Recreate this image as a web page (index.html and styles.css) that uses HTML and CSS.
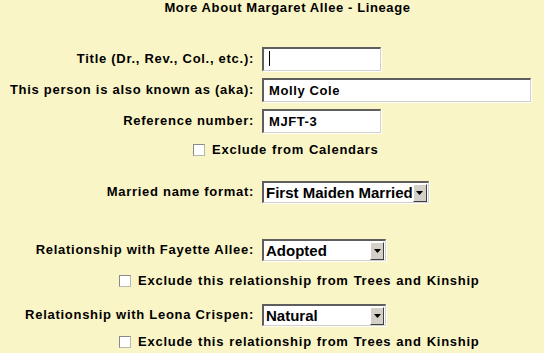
FILE: index.html
```html
<!DOCTYPE html>
<html>
<head>
<meta charset="utf-8">
<link rel="stylesheet" href="styles.css">
</head>
<body>
<div class="page">
  <h1 class="title">More About Margaret Allee - Lineage</h1>

  <div class="row row-first">
    <label class="lbl">Title (Dr., Rev., Col., etc.):</label>
    <span class="caret-wrap"><input class="txt w-short" type="text" value=""></span>
  </div>
  <div class="row row-tight">
    <label class="lbl">This person is also known as (aka):</label>
    <input class="txt w-long" type="text" value="Molly Cole">
  </div>
  <div class="row row-tight">
    <label class="lbl">Reference number:</label>
    <input class="txt w-short" type="text" value="MJFT-3">
  </div>
  <div class="check check-cal">
    <span class="box"></span><span class="ctext">Exclude from Calendars</span>
  </div>

  <div class="row row-married">
    <label class="lbl">Married name format:</label>
    <div class="sel"><span class="sel-text">First Maiden Married</span><span class="sel-btn"><svg width="7" height="4" viewBox="0 0 7 4"><path d="M0 0H7L3.5 4Z" fill="#000"/></svg></span></div>
  </div>

  <div class="row row-fayette">
    <label class="lbl">Relationship with Fayette Allee:</label>
    <div class="sel w-sel"><span class="sel-text">Adopted</span><span class="sel-btn"><svg width="7" height="4" viewBox="0 0 7 4"><path d="M0 0H7L3.5 4Z" fill="#000"/></svg></span></div>
  </div>
  <div class="check check-rel check-a">
    <span class="box"></span><span class="ctext">Exclude this relationship from Trees and Kinship</span>
  </div>

  <div class="row row-leona">
    <label class="lbl">Relationship with Leona Crispen:</label>
    <div class="sel w-sel"><span class="sel-text">Natural</span><span class="sel-btn"><svg width="7" height="4" viewBox="0 0 7 4"><path d="M0 0H7L3.5 4Z" fill="#000"/></svg></span></div>
  </div>
  <div class="check check-rel check-b">
    <span class="box"></span><span class="ctext">Exclude this relationship from Trees and Kinship</span>
  </div>
</div>
</body>
</html>
```
FILE: styles.css
```css
html, body {
  margin: 0;
  padding: 0;
  background: #faf5c6;
}
body {
  width: 544px;
  height: 353px;
  overflow: hidden;
  font-family: "Liberation Sans", Arial, sans-serif;
  font-weight: bold;
  font-size: 13px;
  color: #000;
}
.page {
  display: flex;
  flex-direction: column;
}
.title {
  margin: 0;
  padding-left: 31px;
  height: 16px;
  line-height: 16px;
  font-size: 13px;
  letter-spacing: 0.6px;
  text-align: center;
  font-weight: bold;
}
.row {
  display: grid;
  grid-template-columns: 254px auto;
  column-gap: 8px;
  align-items: center;
  justify-items: start;
}
.lbl {
  justify-self: end;
  letter-spacing: 0.72px;
  white-space: nowrap;
  line-height: 16px;
}
.row-first { margin-top: 31px; }
.row-tight { margin-top: 7px; }
.row-married { margin-top: 22px; }
.row-fayette { margin-top: 36px; }
.row-leona { margin-top: 14px; }

.txt {
  box-sizing: border-box;
  height: 24px;
  margin: 0;
  padding: 0 0 0 5px;
  background: #fff;
  border-top: 2px solid #5e5e5e;
  border-left: 2px solid #5e5e5e;
  border-right: 1px solid #d4d0c8;
  border-bottom: 1px solid #d4d0c8;
  box-shadow: 1px 1px 0 #fff;
  font: bold 13px "Liberation Sans", Arial, sans-serif;
  letter-spacing: 0.6px;
  color: #000;
  outline: none;
}
.w-short { width: 119px; }
.w-long { width: 269px; }
.caret-wrap {
  position: relative;
  display: inline-block;
  line-height: 0;
}
.caret-wrap::after {
  content: "";
  position: absolute;
  left: 7px;
  top: 4px;
  width: 1px;
  height: 15px;
  background: #000;
}

.check {
  display: flex;
  align-items: center;
  height: 18px;
  letter-spacing: 0.75px;
  word-spacing: 0.6px;
}
.check-cal { margin-top: 8px; padding-left: 193px; }
.check-rel { padding-left: 119px; }
.check-a { margin-top: 11px; }
.check-b { margin-top: 7px; }
.box {
  box-sizing: border-box;
  width: 12px;
  height: 12px;
  background: #fff;
  border: 1px solid #8a8a8a;
  border-right-color: #b8b8b0;
  border-bottom-color: #b8b8b0;
  margin-right: 7px;
  flex: none;
}
.ctext {
  line-height: 16px;
}

.sel {
  box-sizing: border-box;
  height: 22px;
  display: inline-flex;
  align-items: stretch;
  background: #fff;
  border-top: 2px solid #5e5e5e;
  border-left: 2px solid #5e5e5e;
  border-right: 1px solid #d4d0c8;
  border-bottom: 1px solid #d4d0c8;
  box-shadow: 1px 1px 0 #fff;
}
.w-sel { width: 124px; }
.sel-text {
  flex: 1;
  display: flex;
  align-items: center;
  padding-left: 2px;
  font-size: 15px;
  white-space: nowrap;
}
.sel-btn {
  box-sizing: border-box;
  width: 14px;
  flex: none;
  background: #d4d0c8;
  border-top: 1px solid #fff;
  border-left: 1px solid #fff;
  border-right: 1px solid #404040;
  border-bottom: 1px solid #404040;
  display: flex;
  align-items: center;
  justify-content: center;
  margin: 1px 1px 0 0;
}
.sel-btn svg { display: block; }
```
